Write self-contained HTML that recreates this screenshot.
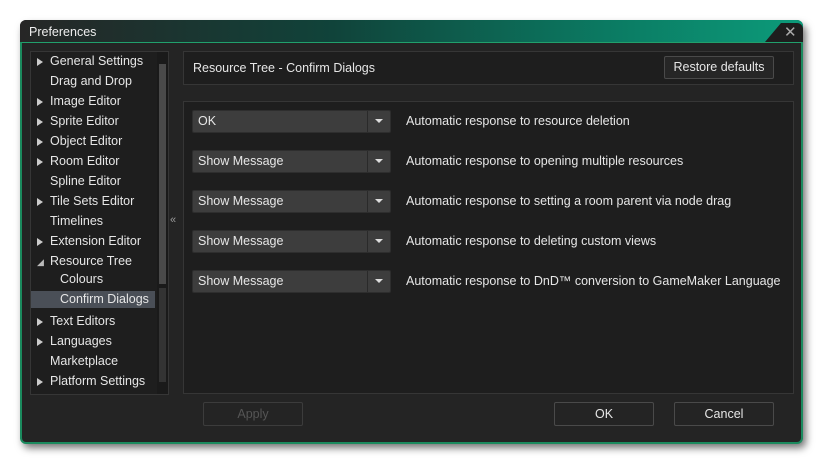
<!DOCTYPE html>
<html><head><style>
body{margin:0;width:823px;height:463px;background:#fff;position:relative;overflow:hidden;font-family:"Liberation Sans",sans-serif;font-size:12.5px;color:#e6e6e6}
.abs{position:absolute}
.win{left:20px;top:20px;width:783px;height:423px;background:#242424;border-radius:6px;box-shadow:3px 5px 8px rgba(0,0,0,.55)}
.title{left:20px;top:20px;width:783px;height:22px;border-radius:6px 6px 0 0;background:linear-gradient(90deg,#262626 0%,#10433a 40%,#0b7a62 75%,#0c9b7a 100%)}
.body{left:20px;top:42px;width:779px;height:399px;border:2px solid #1b8a5e;border-top:1px solid #21a06c;border-radius:0 0 6px 6px;background:#242424}
.panel{background:#1e1e1e;border:1px solid #363636}
.tree div{position:absolute;left:19px;white-space:nowrap}
.tri{position:absolute;left:-13px;top:4px;width:0;height:0;border-left:6px solid #ccc;border-top:4.5px solid transparent;border-bottom:4.5px solid transparent}
.dd{position:absolute;left:192px;width:197px;height:21px;background:#3d3d3d;border:1px solid #2e2e2e;border-radius:2px}
.dd span{position:absolute;left:5px;top:3px}
.dd i{position:absolute;right:0;top:0;width:22px;height:21px;border-left:1px solid #2a2a2a}
.dd i:after{content:"";position:absolute;left:7px;top:8px;border-top:4px solid #ddd;border-left:4px solid transparent;border-right:4px solid transparent}
.lbl{position:absolute;left:406px}
.btn{position:absolute;height:22px;border:1px solid #4a4a4a;border-radius:2px;background:#242424;text-align:center;line-height:22px}
</style></head><body>
<div class="abs win"></div>
<div class="abs title"></div>
<div class="abs" style="left:29px;top:25px;color:#eee">Preferences</div>
<div class="abs" style="left:765px;top:23px;width:38px;height:19px;background:#1e1e1e;clip-path:polygon(16px 0,100% 0,100% 100%,0 100%);border-radius:0 6px 0 0"></div>
<div class="abs" style="left:784px;top:23px;color:#aaa;font-size:15px">✕</div>
<div class="abs body"></div>
<div class="abs panel tree" style="left:30px;top:51px;width:137px;height:342px">
<div style="top:2px"><span class="tri"></span>General Settings</div>
<div style="top:22px">Drag and Drop</div>
<div style="top:42px"><span class="tri"></span>Image Editor</div>
<div style="top:62px"><span class="tri"></span>Sprite Editor</div>
<div style="top:82px"><span class="tri"></span>Object Editor</div>
<div style="top:102px"><span class="tri"></span>Room Editor</div>
<div style="top:122px">Spline Editor</div>
<div style="top:142px"><span class="tri"></span>Tile Sets Editor</div>
<div style="top:162px">Timelines</div>
<div style="top:182px"><span class="tri"></span>Extension Editor</div>
<div style="top:202px"><span style="position:absolute;left:-13px;top:3px;color:#bbb;font-size:9px">◢</span>Resource Tree</div>
<div style="top:220px;left:29px">Colours</div>
<div style="top:239px;left:0;width:124px;height:17px;background:#4a4f57"></div>
<div style="top:240px;left:29px">Confirm Dialogs</div>
<div style="top:262px"><span class="tri"></span>Text Editors</div>
<div style="top:282px"><span class="tri"></span>Languages</div>
<div style="top:302px">Marketplace</div>
<div style="top:322px"><span class="tri"></span>Platform Settings</div>
<div style="left:126px;top:0;width:11px;height:342px;background:#1a1a1a"></div>
<div style="left:128px;top:12px;width:7px;height:220px;background:#4a4a4a"></div>
<div style="left:128px;top:236px;width:7px;height:94px;background:#333"></div>
</div>
<div class="abs" style="left:170px;top:214px;color:#999;font-size:11px">«</div>
<div class="abs panel" style="left:183px;top:51px;width:609px;height:32px"></div>
<div class="abs" style="left:193px;top:61px">Resource Tree - Confirm Dialogs</div>
<div class="btn" style="left:664px;top:56px;width:108px;height:21px;line-height:21px;background:#262626">Restore defaults</div>
<div class="abs panel" style="left:183px;top:101px;width:609px;height:291px"></div>
<div class="dd" style="top:110px"><span>OK</span><i></i></div>
<div class="lbl" style="top:114px">Automatic response to resource deletion</div>
<div class="dd" style="top:150px"><span>Show Message</span><i></i></div>
<div class="lbl" style="top:154px">Automatic response to opening multiple resources</div>
<div class="dd" style="top:190px"><span>Show Message</span><i></i></div>
<div class="lbl" style="top:194px">Automatic response to setting a room parent via node drag</div>
<div class="dd" style="top:230px"><span>Show Message</span><i></i></div>
<div class="lbl" style="top:234px">Automatic response to deleting custom views</div>
<div class="dd" style="top:270px"><span>Show Message</span><i></i></div>
<div class="lbl" style="top:274px">Automatic response to DnD™ conversion to GameMaker Language</div>
<div class="btn" style="left:203px;top:402px;width:98px;color:#555;border-color:#3c3c3c">Apply</div>
<div class="btn" style="left:554px;top:402px;width:98px">OK</div>
<div class="btn" style="left:674px;top:402px;width:98px">Cancel</div>
</body></html>
